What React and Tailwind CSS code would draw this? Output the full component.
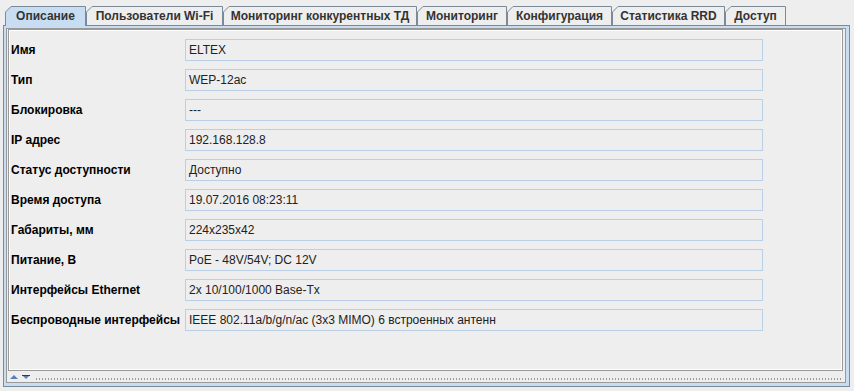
import React from "react";

const tabs = [
  { label: "Описание", w: 81, active: true },
  { label: "Пользователи Wi-Fi", w: 137 },
  { label: "Мониторинг конкурентных ТД", w: 194 },
  { label: "Мониторинг", w: 90 },
  { label: "Конфигурация", w: 105 },
  { label: "Статистика RRD", w: 113 },
  { label: "Доступ", w: 61 },
];

const rows = [
  ["Имя", "ELTEX"],
  ["Тип", "WEP-12ac"],
  ["Блокировка", "---"],
  ["IP адрес", "192.168.128.8"],
  ["Статус доступности", "Доступно"],
  ["Время доступа", "19.07.2016 08:23:11"],
  ["Габариты, мм", "224x235x42"],
  ["Питание, В", "PoE - 48V/54V; DC 12V"],
  ["Интерфейсы Ethernet", "2x 10/100/1000 Base-Tx"],
  ["Беспроводные интерфейсы", "IEEE 802.11a/b/g/n/ac (3x3 MIMO) 6 встроенных антенн"],
];

// tab with the slanted top-left corner, like the Metal look
function Tab({ label, w, active }) {
  const h = active ? 20 : 19;
  return (
    <div
      className={`relative flex items-center justify-center shrink-0 ${active ? "z-10 h-[20px] -mb-px" : "h-[19px]"}`}
      style={{ width: w }}
    >
      <svg className="absolute inset-0" width={w} height={h}>
        <path
          d={`M0.5 ${h} L0.5 6 L6 0.5 L${w - 0.5} 0.5 L${w - 0.5} ${h}`}
          fill={active ? "#c8ddf2" : "#eeeeee"}
          stroke="#7a8a99"
        />
      </svg>
      <span className={`relative text-[12px] font-bold text-[#333] leading-none ${active ? "-mt-px" : "mt-px"}`}>
        {label}
      </span>
    </div>
  );
}

export default function App() {
  return (
    <div
      className="w-[854px] h-[391px] bg-[#eeeeee] pt-[6px] pl-[3px] overflow-hidden"
      style={{ fontFamily: '"Liberation Sans", Arial, sans-serif' }}
    >
      {/* tab strip */}
      <div className="flex items-end pl-[2px]">
        {tabs.map((t) => (
          <Tab key={t.label} {...t} />
        ))}
      </div>

      {/* content panel */}
      <div className="w-[847px] h-[362px] border border-[#7a8a99] bg-[#c8ddf2] pt-[2px] pl-[2px] pr-[3px] pb-[3px] flex">
        <div className="flex-1 border border-[#999999] bg-[#eeeeee] flex flex-col">
          <div className="h-[342px] ml-px mr-[2px] border border-[#999999] shadow-[inset_0_0_0_1px_#ffffff] pt-[9px] pl-[2px] flex flex-col gap-[8px]">
            {rows.map(([k, v]) => (
              <div key={k} className="flex items-center h-[22px]">
                <div className="w-[174px] text-[12px] font-bold text-black">{k}</div>
                <div className="w-[578px] h-[22px] border border-[#b8cfe5] pl-[3px] flex items-center text-[12px] text-[#222]">
                  {v}
                </div>
              </div>
            ))}
          </div>

          {/* split pane divider with one-touch arrows */}
          <div className="flex-1 flex items-center pl-[3px] pr-[2px]">
            <svg width="24" height="6" className="shrink-0">
              <polygon points="0,5 4,1 8,5" fill="#5b7fbd" />
              <polygon points="12,1 20,1 16,5" fill="#5b7fbd" />
              <line x1="12" y1="1.5" x2="20" y2="1.5" stroke="#2d3a4f" />
            </svg>
            <div className="flex-1 h-[2px] mt-[4px] ml-[2px] bg-[repeating-linear-gradient(90deg,#9a9a9a_0_1px,transparent_1px_3px)]" />
          </div>
        </div>
      </div>
    </div>
  );
}
